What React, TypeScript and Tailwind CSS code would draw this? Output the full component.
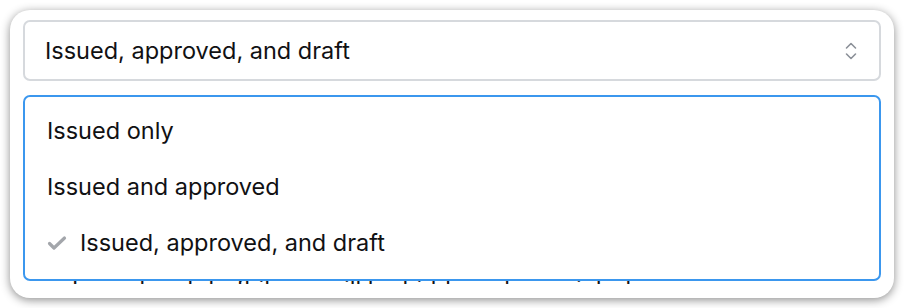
import React from 'react'

const options = [
  { label: 'Issued only', selected: false },
  { label: 'Issued and approved', selected: false },
  { label: 'Issued, approved, and draft', selected: true },
]

const ChevronUpDown = () => (
  <svg width="12" height="18" viewBox="0 0 12 18" fill="none" stroke="#8b9098" strokeWidth="1.6" strokeLinecap="round" strokeLinejoin="round">
    <polyline points="1.5,6 6,1.5 10.5,6" />
    <polyline points="1.5,12 6,16.5 10.5,12" />
  </svg>
)

const Check = () => (
  <svg width="20" height="16" viewBox="0 0 20 16" fill="none" stroke="#a3a6ab" strokeWidth="3.2" strokeLinecap="round" strokeLinejoin="round">
    <polyline points="2.5,8.5 7,13 17.5,3" />
  </svg>
)

export default function App() {
  return (
    <div className="w-[904px] h-[308px] bg-white p-[10px] font-['Inter',sans-serif]">
      <div className="relative h-[288px] rounded-[20px] bg-white px-[13px] pt-[10px] shadow-[0_2px_10px_rgba(0,0,0,0.45)]">
        {/* Select trigger */}
        <div className="flex h-[61px] items-center justify-between rounded-[7px] border-2 border-[#d6d9dd] bg-white pl-[20px] pr-[22px]">
          <span className="text-[23.5px] text-[#111113]">Issued, approved, and draft</span>
          <ChevronUpDown />
        </div>

        {/* Content behind the menu */}
        <div className="h-[203px] overflow-hidden pl-[49px] pt-[194px]">
          <p className="whitespace-nowrap text-[23.5px] leading-[28px] text-[#111113]">
            Issued and draft items will be hidden when printed.
          </p>
        </div>

        {/* Open menu */}
        <div className="absolute left-[13px] right-[13px] top-[85px] h-[186px] rounded-[7px] border-2 border-[#3b97ee] bg-white pt-[6px]">
          {options.map((o) => (
            <div key={o.label} className="flex h-[56px] items-center pl-[22px] text-[23.5px] text-[#111113]">
              {o.selected ? (
                <>
                  <span className="mr-[13px] flex w-[20px] items-center"><Check /></span>
                  <span>{o.label}</span>
                </>
              ) : (
                <span>{o.label}</span>
              )}
            </div>
          ))}
        </div>
      </div>
    </div>
  )
}
